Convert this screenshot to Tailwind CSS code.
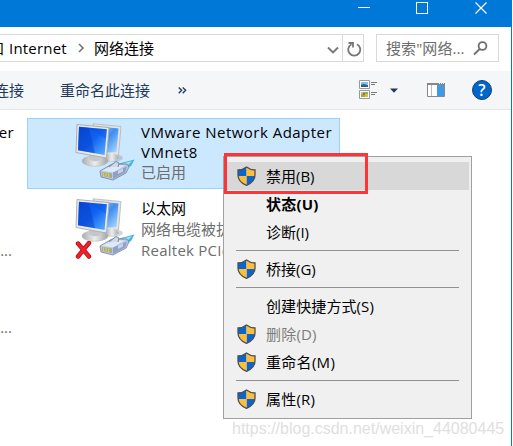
<!DOCTYPE html>
<html lang="zh-CN">
<head>
<meta charset="utf-8">
<title>网络连接</title>
<script src="https://cdn.jsdelivr.net/npm/@tailwindcss/browser@4"></script>
</head>
<body class="bg-white">
<svg class="absolute w-0 h-0">
  <defs>
    <linearGradient id="scr" x1="0" y1="0" x2="1" y2="1"><stop offset="0" stop-color="#0a48dc"/><stop offset=".5" stop-color="#1163f2"/><stop offset="1" stop-color="#5cb4ff"/></linearGradient>
    <linearGradient id="scr2" x1="0" y1="0" x2="1" y2="1"><stop offset="0" stop-color="#a9d6fb"/><stop offset=".5" stop-color="#3f8df0"/><stop offset="1" stop-color="#b5e2ff"/></linearGradient>
    <linearGradient id="base" x1="0" y1="0" x2="1" y2="0"><stop offset="0" stop-color="#a9acae"/><stop offset=".5" stop-color="#eceded"/><stop offset="1" stop-color="#9fa3a6"/></linearGradient>
    <clipPath id="shieldclip"><path d="M9.500 1C7 3 4 4 1 4V9C1 14 5 17.500 9.500 19.500C14 17.500 18 14 18 9V4C15 4 12 3 9.500 1Z"/></clipPath>
  </defs>
  <symbol id="shield" viewBox="0 0 19 20">
    <g clip-path="url(#shieldclip)">
      <path fill="#0a66cc" d="M0 0H9.500V10H0zM9.500 10H19V20H9.500z"/>
      <path fill="#ffbd3a" d="M9.500 0H19V10H9.500zM0 10H9.500V20H0z"/>
    </g>
    <path d="M9.500 1C7 3 4 4 1 4V9C1 14 5 17.500 9.500 19.300C14 17.500 18 14 18 9V4C15 4 12 3 9.500 1Z" fill="none" stroke="#4b4f55" stroke-width="1.300"/>
  </symbol>
  <symbol id="net" viewBox="0 0 60 58">
    <ellipse cx="37" cy="35" rx="11" ry="4" fill="#7d8c99" opacity=".35"/>
    <path d="M18 .800L46 3.500L43.500 32L26 34Z" fill="#e2e4e3" stroke="#b0b6b8" stroke-width=".8"/>
    <path d="M20 3L43.500 5.500L41.500 29L28 30Z" fill="url(#scr2)"/>
    <path d="M30 31L39 30L44 35Q38 40 32 38Z" fill="url(#base)"/>
    <ellipse cx="20" cy="38" rx="13" ry="5.300" fill="url(#base)" stroke="#b5b8ba" stroke-width=".6"/>
    <path d="M14 29L24 31L25 37Q19 40 14 36Z" fill="#c4c7c9"/>
    <path d="M2 1.500L34 4.500L31.500 35L1 29.500Z" fill="#e9eae8" stroke="#a5aaae" stroke-width=".9"/>
    <path d="M4 3.800L31.800 6.300L29.600 32L3 27.300Z" fill="url(#scr)"/>
    <path d="M4 3.800L14 4.700L20 30.300L3 27.300Z" fill="#073fc4" opacity=".45"/>
    <path d="M14 4.700L31.800 6.300L31 16Z" fill="#0a4ee0" opacity=".3"/>
    <path d="M44 40.500L59.500 36.500L56 43L50 46Z" fill="#43b4de"/>
    <path d="M48 40.500L57 38L52 43Z" fill="#a5e4f4"/>
    <path d="M25 48L37 41L52 41L54 44L51 50L38 57L26 54Z" fill="#b9c8e0" stroke="#7080a0" stroke-width=".8"/>
    <path d="M26.500 47.800L38 42L50 42.500L38 49.500Z" fill="#dfe8f6"/>
    <path d="M38 49.500L52 43.500L50 49.500L38 56Z" fill="#8fa2c6"/>
    <path d="M43 47.500L48 45.200V48.500L43 51Z" fill="#c6d4ea"/>
    <path d="M34 44L41 38.500L44 40L43 44" fill="#cfd9ea" stroke="#71809b" stroke-width=".9"/>
    <path d="M27 49L37 50.500V55L27 53Z" fill="#a6a98c"/>
    <path d="M28.500 49.500V53M31 50V53.500M33.500 50.500V54" stroke="#dfd04a" stroke-width="1.200"/>
  </symbol>
</svg>

<div class="relative w-[513px] h-[446px] overflow-hidden bg-white font-['Open_Sans','Noto_Sans_CJK_SC',sans-serif] text-[15px] leading-5 whitespace-nowrap">
  <div class="flex flex-col w-[512px] h-[446px] border-r border-[#0078d7]">
    <header class="h-[27px] shrink-0 bg-[#0078d7] flex justify-end">
      <svg class="w-[160px] h-[27px]" viewBox="351 0 160 27" fill="none" stroke="#fff" shape-rendering="crispEdges">
        <path d="M358 7.500H370"/><path d="M416.500 2.500H427.500V13.500H416.500Z"/>
        <path d="M475.500 2.500L486.500 13.500M486.500 2.500L475.500 13.500" shape-rendering="auto" stroke-width="1.200"/>
      </svg>
    </header>

    <div class="h-11 shrink-0 flex pt-[7px]">
      <div class="flex w-[364px] h-7 border border-l-0 border-[#d9d9d9]">
        <div class="flex-1 flex items-center relative">
          <span class="absolute -left-[11px] top-[3px]">和</span>
          <span class="ml-[9px] w-[60px] tracking-[0.2px]">Internet</span>
          <svg class="w-[7px] h-[10px] ml-[9px]" viewBox="0 0 7 10" fill="none" stroke="#777" stroke-width="1.700"><path d="M1 1L5 5L1 9"/></svg>
          <span class="ml-[9px]">网络连接</span>
          <svg class="ml-auto mr-[3px] mt-1 w-3 h-[9px]" viewBox="0 0 12 9" fill="none" stroke="#777" stroke-width="1.900"><path d="M1 1.500L6 6.500L11 1.500"/></svg>
        </div>
        <div class="w-[21px] border-l border-[#d9d9d9] flex items-center justify-center">
          <svg class="w-[15px] h-[16px] mt-px ml-[2px]" viewBox="0 0 15 16" fill="none" stroke="#777" stroke-width="1.800"><path d="M10 3.200A6 6 0 1 1 4.500 3.200"/><path d="M1.500 2H6V6.500"/></svg>
        </div>
      </div>
      <div class="ml-3 w-[123px] h-7 border border-[#d9d9d9] flex items-center pl-[9px] text-[#6d6d6d]">
        <span class="tracking-[0.1px]">搜索"网络...</span>
        <svg class="ml-auto mr-[10px] w-[15px] h-[15px]" viewBox="0 0 15 15" fill="none" stroke="#6f6f6f" stroke-width="1.800"><circle cx="9.500" cy="5" r="3.900"/><path d="M6.700 8L1 13.500"/></svg>
      </div>
    </div>

    <nav class="h-[39px] shrink-0 flex items-center bg-[#f4f6f8] border-b border-[#e4e6e8] text-[#1e395b]">
      <span class="-ml-[6px]">连接</span>
      <span class="ml-9">重命名此连接</span>
      <svg class="ml-7 w-[9px] h-[7px]" viewBox="0 0 9 7" fill="none" stroke="#1e395b" stroke-width="1.300"><path d="M.7.500L3.700 3.300L.7 6.200M4.700.500L7.700 3.300L4.700 6.200"/></svg>
      <svg class="ml-auto w-[19px] h-[20px]" viewBox="0 0 19 20">
        <path d="M.5.500H10.500V8.500H.5ZM.5 10.500H10.500V18.500H.5Z" fill="#fff" stroke="#999"/>
        <path d="M2 2H9V4.500H2Z" fill="#86bde8"/><path d="M2 4.500L5 4L9 5V7H2Z" fill="#28618f"/>
        <path d="M2 12H9V17H2Z" fill="#7bbb59"/><path d="M2 12H4V14H2ZM6 14H9V17H6Z" fill="#e4b548"/><path d="M4 13H6V15H4Z" fill="#d35a3a"/>
        <path d="M12 2.500H18M12 4.500H16M12 12.500H18M12 14.500H16" stroke="#777"/>
      </svg>
      <svg class="ml-[12px] mr-px w-2 h-[5px]" viewBox="0 0 8 5"><path d="M0 .500H8L4 4.800Z" fill="#1e395b"/></svg>
      <svg class="ml-[28px] w-[18px] h-[14px]" viewBox="0 0 18 14">
        <path d="M.5.500H17.500V13.500H.5Z" fill="#fff" stroke="#888"/><path d="M0 0H18V2H0Z" fill="#888"/>
        <path d="M12 .500H13M14 .500H15M16 .500H17" stroke="#fff"/><path d="M4.500 2V13" stroke="#bbb"/><path d="M10 2H17V13H10Z" fill="#3e9ae4"/>
      </svg>
      <span class="ml-[27px] mr-[19px] w-5 h-5 rounded-full bg-[#0066cc] border border-[#17416e] text-white text-[16px] leading-[18px] text-center font-semibold">?</span>
    </nav>

    <main class="relative flex-1 flex pt-2">
      <div class="w-[27px] relative shrink-0">
        <span class="absolute right-[13px] top-[4px] tracking-[0.4px]">Adapter</span>
        <span class="absolute right-[15px] top-[122px] text-[#6d6d6d]">...</span>
        <span class="absolute right-[15px] top-[199px] text-[#6d6d6d]">...</span>
      </div>
      <div class="w-[313px] flex flex-col">
        <div class="h-[71px] flex bg-[#cce8ff] border border-[#99d1ff]">
          <svg class="ml-[47px] mt-1 w-[60px] h-[58px]"><use href="#net"/></svg>
          <div class="ml-[6px] pt-[3px]">
            <div class="tracking-[0.48px]">VMware Network Adapter</div>
            <div class="tracking-[0.48px]">VMnet8</div>
            <div class="text-[#6d6d6d] leading-[21px]">已启用</div>
          </div>
        </div>
        <div class="h-[71px] mt-[7px] flex px-px">
          <div class="relative ml-[47px] mt-[2px] w-[60px] h-[60px]">
            <svg class="w-[60px] h-[58px]"><use href="#net"/></svg>
            <svg class="absolute left-0 top-[43px] w-[17px] h-[18px]" viewBox="0 0 17 18"><path d="M3 2.500L14 15.500M14 2L3 15.500" stroke="#a90e16" stroke-width="4.400" stroke-linecap="round"/><path d="M3 2.500L14 15.500M14 2L3 15.500" stroke="#ee2029" stroke-width="3" stroke-linecap="round"/></svg>
          </div>
          <div class="ml-[6px] pt-[2px] leading-[21px] text-[#6d6d6d]">
            <div class="text-black">以太网</div>
            <div>网络电缆被拔出</div>
            <div class="tracking-[0.25px]">Realtek PCIe</div>
          </div>
        </div>
      </div>
    </main>
  </div>

  <div class="absolute left-[232px] top-[419px] font-['Liberation_Sans',sans-serif] text-[16px] leading-5 text-[#e0e0e0]">https://blog.csdn.net/weixin_44080445</div>

  <div class="absolute left-[223px] top-[156px] w-[249px] h-[263px] border border-[#a0a0a0] bg-[#f0f0f0] px-[2px] pt-[5px] flex flex-col">
    <div class="h-7 flex items-center bg-[#d8d8d8] pl-[11px]"><svg class="w-[19px] h-5"><use href="#shield"/></svg><span class="ml-[10px]">禁用(B)</span></div>
    <div class="h-7 flex items-center pl-10 font-bold tracking-[0.2px]">状态(U)</div>
    <div class="h-7 flex items-center pl-10">诊断(I)</div>
    <div class="h-px mt-1 mb-1 ml-[10px] mr-[10px] bg-[#919191]"></div>
    <div class="h-7 flex items-center pl-[11px]"><svg class="w-[19px] h-5"><use href="#shield"/></svg><span class="ml-[10px]">桥接(G)</span></div>
    <div class="h-px mt-1 mb-1 ml-[10px] mr-[10px] bg-[#919191]"></div>
    <div class="h-7 flex items-center pl-10 tracking-[0.1px]">创建快捷方式(S)</div>
    <div class="h-7 flex items-center pl-[11px] text-[#7d7d7d]"><svg class="w-[19px] h-5"><use href="#shield"/></svg><span class="ml-[10px] tracking-[0.2px]">删除(D)</span></div>
    <div class="h-7 flex items-center pl-[11px]"><svg class="w-[19px] h-5"><use href="#shield"/></svg><span class="ml-[10px] tracking-[0.3px]">重命名(M)</span></div>
    <div class="h-px mt-1 mb-1 ml-[10px] mr-[10px] bg-[#919191]"></div>
    <div class="h-7 flex items-center pl-[11px]"><svg class="w-[19px] h-5"><use href="#shield"/></svg><span class="ml-[10px] tracking-[0.2px]">属性(R)</span></div>
  </div>
  <div class="absolute left-[224px] top-[153px] w-[144px] h-[41px] border-[3px] border-[#fb3638]"></div>
</div>
</body>
</html>
